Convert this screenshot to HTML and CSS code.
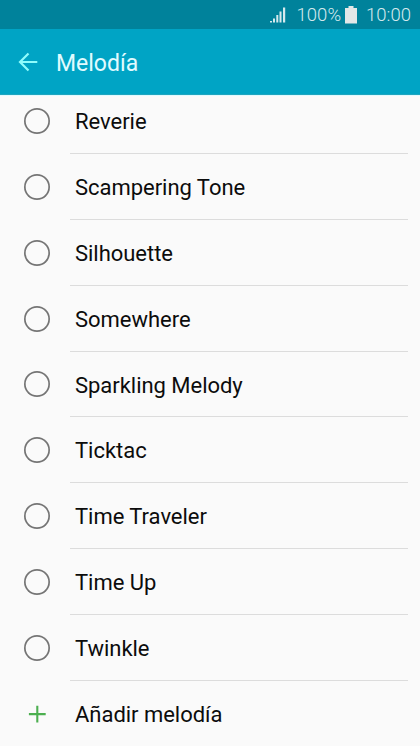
FILE: index.html
```html
<!DOCTYPE html>
<html lang="es">
<head>
    <meta charset="utf-8">
    <title>Melodía</title>
    <link rel="stylesheet" href="styles.css">
</head>
<body>
    <div class="status-bar">
        <svg class="signal" width="16" height="16" viewBox="0 0 16 16">
            <path d="M0 14h2v1.5H0zM3 11.5h2v4H3zM6.3 8h2v7.5h-2zM9.5 4.5h2v11h-2zM13 .5h2.2v15H13z" fill="#d5e9ed"/>
        </svg>
        <span class="battery-level">100%</span>
        <svg class="battery" width="12" height="18" viewBox="0 0 12 18">
            <path d="M3.5 0h5v2H12v15.5H0V2h3.5z" fill="#e3e7e7"/>
        </svg>
        <span class="clock">10:00</span>
    </div>

    <header class="title-bar">
        <svg class="back" width="20" height="20" viewBox="0 0 20 20">
            <path d="M10.5 1.5L2 10l8.5 8.5M2 10h17.3" fill="none" stroke="#8ffcfc" stroke-width="2.2"/>
        </svg>
        <h1 class="title">Melodía</h1>
    </header>

    <main class="list-view">
        <ul class="list">
            <li class="item"><span class="radio"></span><span class="label">Reverie</span></li>
            <li class="item"><span class="radio"></span><span class="label">Scampering Tone</span></li>
            <li class="item"><span class="radio"></span><span class="label">Silhouette</span></li>
            <li class="item"><span class="radio"></span><span class="label">Somewhere</span></li>
            <li class="item"><span class="radio"></span><span class="label">Sparkling Melody</span></li>
            <li class="item"><span class="radio"></span><span class="label">Ticktac</span></li>
            <li class="item"><span class="radio"></span><span class="label">Time Traveler</span></li>
            <li class="item"><span class="radio"></span><span class="label">Time Up</span></li>
            <li class="item"><span class="radio"></span><span class="label">Twinkle</span></li>
            <li class="item">
                <svg class="plus" width="26" height="26" viewBox="0 0 26 26">
                    <path d="M13.3 4.7v16.8M4.9 13.1h16.8" stroke="#4caf50" stroke-width="2.1"/>
                </svg>
                <span class="label">Añadir melodía</span>
            </li>
        </ul>
    </main>
</body>
</html>
```

FILE: styles.css
```css
* {
    box-sizing: border-box;
}

body {
    margin: 0;
    height: 746px;
    display: flex;
    flex-direction: column;
    overflow: hidden;
    background: #fafafa;
    font-family: Roboto, sans-serif;
}

.status-bar {
    display: flex;
    align-items: center;
    justify-content: flex-end;
    flex: none;
    height: 29px;
    padding-right: 9px;
    background: #00829b;
    color: #d5e9ed;
    font-size: 18.5px;
    font-weight: 300;
    line-height: 29px;
}

.signal {
    margin-right: 11px;
}

.battery-level {
    padding-top: 1px;
}

.battery {
    margin: 0 9px 0 4px;
}

.clock {
    padding-top: 1px;
}

.title-bar {
    display: flex;
    align-items: center;
    flex: none;
    height: 66px;
    padding-left: 18px;
    background: #00a4c5;
    border-bottom: 1px solid #1fa5bf;
}

.back {
    margin-right: 18px;
}

.title {
    margin: 4px 0 0;
    color: #e0fbff;
    font-size: 23px;
    font-weight: 400;
    line-height: 30px;
}

.list-view {
    flex: 1;
    min-height: 0;
    overflow: hidden;
    border-top: 1px solid #e0faff;
}

/* the list is scrolled, so the first row starts under the title bar */
.list {
    margin: -8px 0 0;
    padding: 0;
    list-style: none;
}

.item {
    display: grid;
    grid-template-columns: 70px 338px;
    grid-template-rows: 100%;
    align-items: center;
    height: 65.875px;
}

.radio {
    width: 26px;
    height: 26px;
    margin-left: 24.3px;
    border-radius: 50%;
    box-shadow: inset 0 0 0 1.7px #757575;
}

.plus {
    margin-left: 24px;
}

.label {
    height: 100%;
    padding: 2px 0 0 5px;
    border-bottom: 1px solid #dcdcdc;
    color: #0c0c0c;
    font-size: 22px;
    letter-spacing: -0.03px;
    line-height: 63px;
}

.item:last-child .label {
    border-bottom: none;
}
```
